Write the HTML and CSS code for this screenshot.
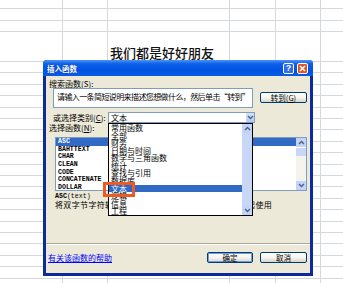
FILE: index.html
```html
<!DOCTYPE html>
<html lang="zh-CN">

<head>
    <meta charset="UTF-8">
    <meta name="viewport" content="width=device-width, initial-scale=1.0">
    <title>插入函数</title>
    <link rel="stylesheet" href="styles.css">
</head>

<body>
    <div class="sheet">
        <!-- Linhas da planilha -->
        <div class="rows rows-top"></div>
        <div class="title-row">我们都是好好朋友</div>
        <div class="rows rows-bottom"></div>

        <!-- Diálogo "插入函数" -->
        <div class="dialog">
            <div class="titlebar">
                <span class="title">插入函数</span>
                <span class="tb-btn help">?</span>
                <span class="tb-btn close">
                    <svg width="7" height="7" viewBox="0 0 7 7">
                        <path d="M1 1L6 6M6 1L1 6" stroke="#fff" stroke-width="1.5" />
                    </svg>
                </span>
            </div>

            <div class="dialog-body">
                <div class="label">搜索函数(<u>S</u>):</div>
                <div class="search-row">
                    <div class="search-box">请输入一条简短说明来描述您想做什么，然后单击“转到”</div>
                    <button class="btn btn-go">转到(<u>G</u>)</button>
                </div>

                <div class="category-row">
                    <span class="cat-label">或选择类别(<u>C</u>):</span>
                    <div class="select">
                        <span class="select-value">文本</span>
                        <span class="select-arrow">
                            <svg width="7" height="5" viewBox="0 0 7 5">
                                <polyline points="1,1 3.5,3.5 6,1" fill="none" stroke="#4d6185" stroke-width="1.4" />
                            </svg>
                        </span>

                        <!-- Lista aberta do select -->
                        <div class="dropdown">
                            <ul class="dropdown-items">
                                <li>常用函数</li>
                                <li>全部</li>
                                <li>财务</li>
                                <li>日期与时间</li>
                                <li>数学与三角函数</li>
                                <li>统计</li>
                                <li>查找与引用</li>
                                <li>数据库</li>
                                <li class="selected">文本</li>
                                <li>逻辑</li>
                                <li>信息</li>
                                <li>工程</li>
                            </ul>
                            <div class="scrollbar scrollbar-full">
                                <span class="sb-btn">
                                    <svg width="7" height="5" viewBox="0 0 7 5">
                                        <polyline points="1,4 3.5,1.5 6,4" fill="none" stroke="#4d6185" stroke-width="1.4" />
                                    </svg>
                                </span>
                                <span class="sb-btn">
                                    <svg width="7" height="5" viewBox="0 0 7 5">
                                        <polyline points="1,1 3.5,3.5 6,1" fill="none" stroke="#4d6185" stroke-width="1.4" />
                                    </svg>
                                </span>
                            </div>
                            <div class="mark-box"></div>
                        </div>
                    </div>
                </div>

                <div class="label label-fn">选择函数(<u>N</u>):</div>
                <div class="fn-list">
                    <ul class="fn-items">
                        <li class="selected">ASC</li>
                        <li>BAHTTEXT</li>
                        <li>CHAR</li>
                        <li>CLEAN</li>
                        <li>CODE</li>
                        <li>CONCATENATE</li>
                        <li>DOLLAR</li>
                    </ul>
                    <div class="scrollbar">
                        <span class="sb-btn">
                            <svg width="7" height="5" viewBox="0 0 7 5">
                                <polyline points="1,4 3.5,1.5 6,4" fill="none" stroke="#4d6185" stroke-width="1.4" />
                            </svg>
                        </span>
                        <span class="sb-thumb"></span>
                        <span class="sb-track"></span>
                        <span class="sb-btn">
                            <svg width="7" height="5" viewBox="0 0 7 5">
                                <polyline points="1,1 3.5,3.5 6,1" fill="none" stroke="#4d6185" stroke-width="1.4" />
                            </svg>
                        </span>
                    </div>
                </div>

                <div class="fn-sig"><b>ASC</b>(text)</div>
                <div class="fn-desc">将双字节字符转换成单字节字符。与双字节字符集一起使用</div>

                <div class="separator"></div>

                <div class="footer">
                    <a class="help-link" href="#">有关该函数的帮助</a>
                    <button class="btn btn-ok">确定</button>
                    <button class="btn btn-cancel">取消</button>
                </div>
            </div>
        </div>
    </div>
</body>

</html>
```

FILE: styles.css
```css
/* Estilos Gerais */
body,
html {
    margin: 0;
    padding: 0;
}

body {
    width: 343px;
    height: 283px;
    overflow: hidden;
    background: #fff;
    font-family: "Noto Sans CJK SC", "Noto Sans", sans-serif;
}

/* Planilha ao fundo */
.sheet {
    position: relative;
    width: 343px;
    height: 283px;
    background-image:
        linear-gradient(#d4d7de, #d4d7de),
        linear-gradient(#d4d7de, #d4d7de),
        linear-gradient(#d4d7de, #d4d7de),
        linear-gradient(#d4d7de, #d4d7de),
        linear-gradient(#d4d7de, #d4d7de);
    background-size: 1px 100%;
    background-repeat: no-repeat;
    background-position: 62px 0, 107px 0, 229px 0, 275px 0, 320px 0;
}

.rows-top {
    height: 44px;
    background: repeating-linear-gradient(to bottom, transparent 0, transparent 10.5px, #d4d7de 10.5px, #d4d7de 11.5px);
    background-position: 0 -2px;
}

.title-row {
    height: 17px;
    padding-left: 110px;
    border-bottom: 1px solid #d4d7de;
    font-size: 13px;
    font-weight: 500;
    line-height: 17px;
    color: #111;
}

.rows-bottom {
    height: 221px;
    background: repeating-linear-gradient(to bottom, transparent 0, transparent 10.4px, #d4d7de 10.4px, #d4d7de 11.4px);
}

/* Janela do diálogo */
.dialog {
    position: absolute;
    left: 43px;
    top: 60px;
    width: 270px;
    height: 216px;
    display: flex;
    flex-direction: column;
    background: #0c2a9c;
    border-radius: 4px 4px 0 0;
    overflow: hidden;
}

.titlebar {
    height: 16px;
    display: flex;
    align-items: center;
    padding: 0 5px 0 4px;
    background: linear-gradient(to bottom, #4a94f8 0%, #0b5fe8 25%, #0054e3 65%, #0a5ae6 100%);
    color: #fff;
}

.title {
    flex: 1;
    font-size: 7.5px;
    font-weight: bold;
    text-shadow: 0 0 1px #0a2a80;
}

.tb-btn {
    width: 11px;
    height: 11px;
    box-sizing: border-box;
    border: 1px solid #fff;
    border-radius: 2px;
    display: flex;
    align-items: center;
    justify-content: center;
}

.help {
    margin-right: 3px;
    background: #2e6cee;
    font-family: "Liberation Sans", sans-serif;
    font-size: 9px;
    font-weight: bold;
    line-height: 9px;
}

.close {
    background: #dc552c;
}

.dialog-body {
    flex: 1;
    margin: 0 3px 3px;
    padding: 3px 3px 0 0;
    display: flex;
    flex-direction: column;
    background: #ece9d8;
    font-size: 8px;
    color: #000;
}

.label {
    height: 9px;
    line-height: 9px;
    padding-left: 3px;
    white-space: nowrap;
}

/* Busca */
.search-row {
    display: flex;
    align-items: flex-start;
}

.search-box {
    width: 200px;
    height: 20px;
    margin-left: 7px;
    box-sizing: border-box;
    padding: 4px 3px;
    border: 1px solid #7f9db9;
    background: #fff;
    line-height: 8px;
    letter-spacing: -0.6px;
    white-space: nowrap;
    overflow: hidden;
}

.btn {
    height: 11px;
    box-sizing: border-box;
    padding: 0;
    border: 1px solid #003c74;
    border-radius: 2px;
    background: linear-gradient(to bottom, #fff 0%, #f4f3ee 55%, #d8d3c6 100%);
    font-family: inherit;
    font-size: 7.5px;
    line-height: 9px;
    color: #000;
}

.btn-go {
    width: 47px;
    margin-left: 7px;
    margin-top: 4px;
}

/* Categoria */
.category-row {
    display: flex;
    height: 11px;
    margin-top: 4px;
}

.cat-label {
    width: 62px;
    box-sizing: border-box;
    padding-left: 7px;
    line-height: 11px;
    white-space: nowrap;
}

.select {
    position: relative;
    width: 147px;
    height: 11px;
    box-sizing: border-box;
    display: flex;
    border: 1px solid #7f9db9;
    background: #fff;
}

.select-value {
    flex: 1;
    padding-left: 2px;
    line-height: 9px;
}

.select-arrow {
    width: 8px;
    height: 9px;
    display: flex;
    align-items: center;
    justify-content: center;
    background: linear-gradient(to bottom, #d6e2fc, #b5c9f5);
    border-radius: 1px;
}

.dropdown {
    position: absolute;
    left: -1px;
    top: 10px;
    z-index: 2;
    width: 145px;
    height: 93px;
    box-sizing: border-box;
    display: flex;
    border: 1px solid #000;
    background: #fff;
}

.dropdown-items {
    flex: 1;
    margin: 0;
    padding: 0;
    list-style: none;
}

.dropdown-items li {
    height: 7.58px;
    padding-left: 2px;
    line-height: 7.58px;
    white-space: nowrap;
}

.dropdown-items li.selected,
.fn-items li.selected {
    background: #316ac5;
    color: #fff;
}

.mark-box {
    position: absolute;
    left: -6px;
    top: 58px;
    width: 32px;
    height: 15px;
    box-sizing: border-box;
    border: 3px solid #ee5a24;
}

/* Barras de rolagem */
.scrollbar {
    width: 10px;
    display: flex;
    flex-direction: column;
    background: #f4f3ee;
}

.scrollbar-full {
    justify-content: space-between;
    background: #c9d7f7;
}

.sb-btn {
    height: 9px;
    display: flex;
    align-items: center;
    justify-content: center;
    background: #c3d3fb;
}

.sb-thumb {
    height: 8px;
    background: #c9d7f7;
    border-top: 1px solid #fff;
}

.sb-track {
    flex: 1;
}

/* Lista de funções */
.fn-list {
    width: 252px;
    height: 54px;
    margin-top: 5px;
    margin-left: 9px;
    box-sizing: border-box;
    display: flex;
    border: 1px solid #7f9db9;
    background: #fff;
}

.fn-items {
    flex: 1;
    margin: 0;
    padding: 0;
    list-style: none;
    font-family: "Liberation Mono", monospace;
    font-size: 6.6px;
    font-weight: bold;
}

.fn-items li {
    height: 7.7px;
    padding-left: 2px;
    line-height: 7.7px;
}

.fn-sig {
    height: 8px;
    margin-top: 2px;
    padding-left: 9px;
    font-family: "Liberation Mono", monospace;
    font-size: 6.6px;
    line-height: 8px;
}

.fn-desc {
    height: 8px;
    padding-left: 9px;
    line-height: 8px;
    letter-spacing: 0.35px;
    white-space: nowrap;
}

.separator {
    margin-top: 34px;
    margin-right: -3px;
    border-top: 1px solid #aca899;
    border-bottom: 1px solid #fff;
}

/* Rodapé */
.footer {
    display: flex;
    align-items: center;
    height: 11px;
    margin-top: 7px;
}

.help-link {
    flex: 1;
    padding-left: 2px;
    color: #0000ff;
    text-decoration: underline;
    white-space: nowrap;
}

.btn-ok {
    width: 46px;
    box-shadow: inset 0 0 0 1px #7a9ae0;
}

.btn-cancel {
    width: 47px;
    margin-left: 7px;
}
```
